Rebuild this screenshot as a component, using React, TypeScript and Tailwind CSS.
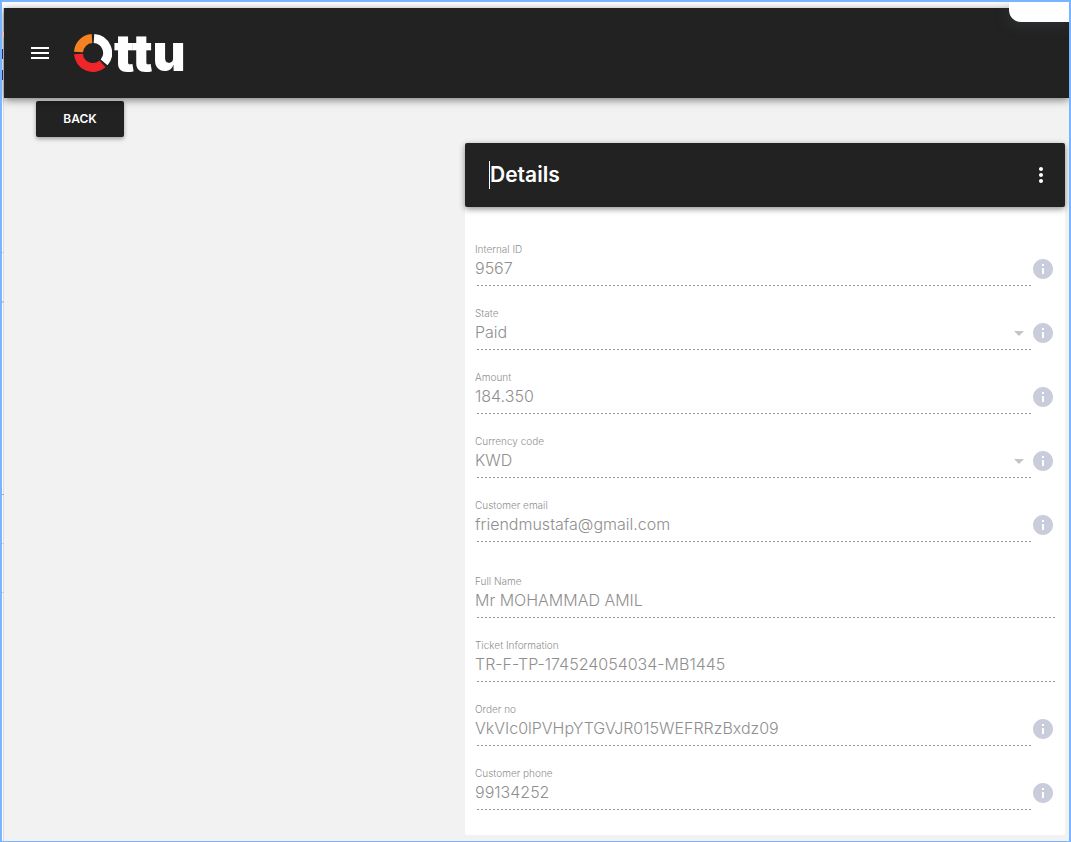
import { MdArrowDropDown, MdInfo, MdMenu, MdMoreVert } from "react-icons/md";
import clsx from "clsx";

type FieldProps = {
  id: string;
  label: string;
  value: string;
  select?: boolean;
  info?: boolean;
  spaced?: boolean;
};

const fields: FieldProps[] = [
  { id: "internal-id", label: "Internal ID", value: "9567", info: true },
  { id: "state", label: "State", value: "Paid", select: true, info: true },
  { id: "amount", label: "Amount", value: "184.350", info: true },
  { id: "currency", label: "Currency code", value: "KWD", select: true, info: true },
  { id: "email", label: "Customer email", value: "friendmustafa@gmail.com", info: true },
  { id: "full-name", label: "Full Name", value: "Mr MOHAMMAD AMIL", spaced: true },
  { id: "ticket", label: "Ticket Information", value: "TR-F-TP-174524054034-MB1445" },
  { id: "order-no", label: "Order no", value: "VkVIc0lPVHpYTGVJR015WEFRRzBxdz09", info: true },
  { id: "phone", label: "Customer phone", value: "99134252", info: true },
];

const controlClass =
  "block h-[29px] w-full appearance-none bg-transparent pb-1.5 text-base font-light text-[#8f8f8f] outline-none";

function Field({ id, label, value, select, info, spaced }: FieldProps) {
  return (
    <div className={clsx("flex items-end", spaced && "mt-3")}>
      <div className="min-w-0 flex-1">
        <label htmlFor={id} className="block h-3.5 text-[10px] leading-3.5 font-light text-[#8f8f8f]">
          {label}
        </label>
        <div className="relative">
          {select ? (
            <>
              <select id={id} className={controlClass} defaultValue={value}>
                <option>{value}</option>
              </select>
              <MdArrowDropDown className="pointer-events-none absolute top-px right-0 size-6 text-[#c4c4c4]" />
            </>
          ) : (
            <input id={id} className={controlClass} value={value} readOnly />
          )}
        </div>
        <div className="h-px bg-[repeating-linear-gradient(to_right,transparent_0_2px,#949494_2px_4px)]" />
      </div>
      {info && (
        <button type="button" aria-label={`About ${label}`} className="mb-[5px] w-6 text-[#c9cddb]">
          <MdInfo className="size-6" />
        </button>
      )}
    </div>
  );
}

function Logo() {
  return (
    <a href="#" aria-label="Ottu" className="flex items-center gap-0.5 text-white">
      <svg viewBox="0 0 38 38" className="size-[38px]" fill="none" strokeWidth="9">
        <path d="M4.5 18A14.5 14.5 0 0 1 18 4.5" stroke="#f58220" />
        <path d="M20 4.5A14.5 14.5 0 0 1 30.1 28.4" stroke="#ffffff" />
        <path d="M28.6 29.8A14.5 14.5 0 0 1 4.5 20" stroke="#ee252b" />
      </svg>
      <span className="text-[51px] leading-10 font-black">ttu</span>
    </a>
  );
}

// Sliver of the page that sits behind the window's left edge
function EdgeMarks() {
  return (
    <svg aria-hidden="true" viewBox="0 0 2 600" className="absolute top-0 left-0 h-[600px] w-0.5">
      <rect y="30" width="2" height="5" fill="#f3b5b5" />
      <rect y="47" width="1" height="10" fill="#1b2f73" />
      <rect y="68" width="1" height="10" fill="#1b2f73" />
      <rect y="250" width="2" height="1" fill="#cfcfcf" />
      <rect y="299" width="2" height="2" fill="#c8c8c8" />
      <rect y="492" width="2" height="1" fill="#a8a8a8" />
      <rect y="541" width="2" height="1" fill="#cfcfcf" />
      <rect y="590" width="2" height="1" fill="#cfcfcf" />
    </svg>
  );
}

export default function App() {
  return (
    <div className="relative flex min-h-screen flex-col overflow-hidden border-t-2 border-r-2 border-b border-l-2 border-[#78b4ff] bg-white pt-1.5 pl-px font-['Inter',sans-serif]">
      <div className="flex-1 border-l border-[#dcdcdc] bg-[#f2f2f2] pb-1.5">
        <header className="relative flex h-[90px] items-center gap-[22px] bg-[#222222] pl-6 shadow-[0_2px_8px_rgba(0,0,0,0.5)]">
          <button type="button" aria-label="Open menu" className="text-white">
            <MdMenu className="size-6" />
          </button>
          <Logo />
        </header>

        <div className="pt-[3px] pl-8">
          <button
            type="button"
            className="block h-9 w-[88px] rounded-xs bg-[#222222] text-xs font-semibold text-white shadow-[0_2px_4px_rgba(0,0,0,0.35)]"
          >
            BACK
          </button>
        </div>

        <main className="mt-1.5 mr-1 ml-auto max-w-[600px] rounded-xs bg-white">
          <div className="flex h-16 items-center justify-between rounded-xs bg-[#222222] pr-3 pl-6 text-white shadow-[0_2px_6px_rgba(0,0,0,0.45)]">
            <h1 className="border-l border-white text-[21px] leading-7 font-semibold">Details</h1>
            <button type="button" aria-label="More actions">
              <MdMoreVert className="size-6" />
            </button>
          </div>
          <form className="flex flex-col gap-5 px-2.5 pt-[35px] pb-[25px]">
            {fields.map((field) => (
              <Field key={field.id} {...field} />
            ))}
          </form>
        </main>
      </div>
      <EdgeMarks />
      <div className="absolute top-0 right-0 h-5 w-[60px] rounded-bl-xl bg-white shadow-[0_2px_16px_rgba(90,110,120,0.25)]" />
    </div>
  );
}
